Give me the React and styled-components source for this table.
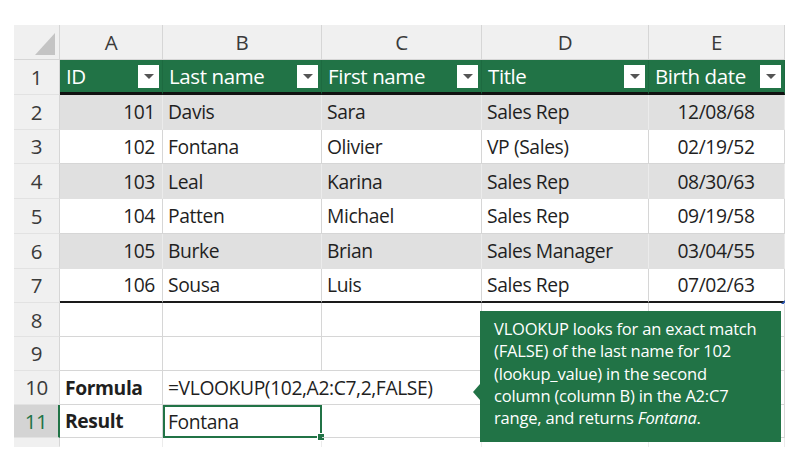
import React from 'react'
import styled, { createGlobalStyle, css } from 'styled-components'

const GREEN = '#217346'
const GRID = '#d6d6d6'
const HEAD_BG = '#f0f0f0'
const BAND = '#e0e0e0'

const GlobalStyle = createGlobalStyle`
  html, body {
    margin: 0;
    background: #ffffff;
  }
  body {
    font-family: 'Open Sans', 'Noto Sans', sans-serif;
    color: #1f1f1f;
  }
`

const Page = styled.div`
  width: 800px;
  height: 474px;
  box-sizing: border-box;
  padding: 25px 15px 0 14px;
  overflow: hidden;
`

const Sheet = styled.div`
  position: relative;
  display: grid;
  grid-template-columns: 46px 103px 159px 160px 167px 136px;
  grid-template-rows: 35px repeat(7, 34.75px) repeat(4, 33.75px) 9px;
  font-size: 19.3px;
  letter-spacing: -0.4px;
`

const Corner = styled.div`
  position: relative;
  background: ${HEAD_BG};
  border-right: 1px solid ${GRID};
  border-bottom: 1px solid ${GRID};

  &::after {
    content: '';
    position: absolute;
    right: 4px;
    bottom: 4px;
    width: 0;
    height: 0;
    border-left: 20px solid transparent;
    border-bottom: 22px solid #c4c4c4;
  }
`

const ColHead = styled.div`
  background: ${HEAD_BG};
  border-right: 1px solid ${GRID};
  border-bottom: 1px solid ${GRID};
  display: flex;
  align-items: center;
  justify-content: center;
  color: #3a3a3a;
  font-size: 20.5px;
`

const RowHead = styled.div`
  box-sizing: border-box;
  display: flex;
  align-items: center;
  justify-content: center;
  font-size: 20.5px;
  background: ${p => (p.$active ? '#d4d4d4' : HEAD_BG)};
  color: ${p => (p.$active ? GREEN : '#3a3a3a')};
  border-right: ${p => (p.$active ? `2px solid ${GREEN}` : `1px solid ${GRID}`)};
  border-bottom: 1px solid ${p => (p.$last ? 'transparent' : '#e2e2e2')};
`

const HeadCell = styled.div`
  box-sizing: border-box;
  background: ${GREEN};
  color: #ffffff;
  font-size: 20.5px;
  display: flex;
  align-items: center;
  justify-content: space-between;
  padding: 0 3px 0 6px;
  border-bottom: 3px solid #111;
  border-right: 1px solid #1d6a40;
`

const FilterButton = styled.span`
  width: 21px;
  height: 23px;
  background: #ffffff;
  display: flex;
  align-items: center;
  justify-content: center;
  margin-top: 1px;

  &::after {
    content: '';
    border-left: 5px solid transparent;
    border-right: 5px solid transparent;
    border-top: 5px solid #555;
  }
`

const Cell = styled.div`
  box-sizing: border-box;
  position: relative;
  display: flex;
  align-items: center;
  white-space: nowrap;
  background: ${p => (p.$band ? BAND : 'transparent')};
  border-right: 1px solid ${p => (p.$band ? '#ebebeb' : GRID)};
  border-bottom: ${p => (p.$edge ? '2px solid #1a1a1a' : p.$band ? `1px solid ${BAND}` : `1px solid ${GRID}`)};
  padding: 0 6px 0 5px;
  justify-content: ${p => (p.$align === 'right' ? 'flex-end' : p.$align === 'center' ? 'center' : 'flex-start')};
  font-weight: ${p => (p.$bold ? 700 : 400)};
  ${p => p.$span && css`grid-column: span ${p.$span};`}
  ${p => p.$pr && css`padding-right: ${p.$pr}px;`}
`

const TailCell = styled.div`
  border-right: 1px solid #ececec;
`

const SelectedCell = styled(Cell)`
  border: 2px solid ${GREEN};
  padding-left: 3px;

  &::after {
    content: '';
    position: absolute;
    right: -5px;
    bottom: -5px;
    width: 6px;
    height: 6px;
    background: ${GREEN};
    border: 1px solid #ffffff;
  }
`

const ResizeMark = styled.span`
  position: absolute;
  right: -1px;
  bottom: -3px;
  width: 0;
  height: 0;
  border-left: 4px solid transparent;
  border-bottom: 4px solid #2f5bb7;
`

const Callout = styled.div`
  position: absolute;
  left: 466px;
  top: 286px;
  width: 301px;
  height: 131px;
  box-sizing: border-box;
  padding: 7px 8px 0 14px;
  background: ${GREEN};
  color: #ffffff;
  font-size: 16.5px;
  line-height: 22.3px;
  letter-spacing: -0.2px;
  white-space: nowrap;

  &::before {
    content: '';
    position: absolute;
    left: -7px;
    top: 73px;
    border-top: 8px solid transparent;
    border-bottom: 8px solid transparent;
    border-right: 7px solid ${GREEN};
  }

  em {
    font-style: italic;
  }
`

const columns = ['A', 'B', 'C', 'D', 'E']
const headers = ['ID', 'Last name', 'First name', 'Title', 'Birth date']
const people = [
  [101, 'Davis', 'Sara', 'Sales Rep', '12/08/68'],
  [102, 'Fontana', 'Olivier', 'VP (Sales)', '02/19/52'],
  [103, 'Leal', 'Karina', 'Sales Rep', '08/30/63'],
  [104, 'Patten', 'Michael', 'Sales Rep', '09/19/58'],
  [105, 'Burke', 'Brian', 'Sales Manager', '03/04/55'],
  [106, 'Sousa', 'Luis', 'Sales Rep', '07/02/63'],
]

const App = () => {
  return (
    <>
      <GlobalStyle />
      <Page>
        <Sheet>
          <Corner />
          {columns.map(c => (
            <ColHead key={c}>{c}</ColHead>
          ))}

          <RowHead>1</RowHead>
          {headers.map(h => (
            <HeadCell key={h}>
              {h}
              <FilterButton />
            </HeadCell>
          ))}

          {people.map((p, i) => {
            const band = i % 2 === 0
            const edge = i === people.length - 1
            return (
              <React.Fragment key={p[0]}>
                <RowHead>{i + 2}</RowHead>
                <Cell $band={band} $edge={edge} $align="right" $pr={7}>{p[0]}</Cell>
                <Cell $band={band} $edge={edge}>{p[1]}</Cell>
                <Cell $band={band} $edge={edge}>{p[2]}</Cell>
                <Cell $band={band} $edge={edge}>{p[3]}</Cell>
                <Cell $band={band} $edge={edge} $align="center">
                  {p[4]}
                  {edge && <ResizeMark />}
                </Cell>
              </React.Fragment>
            )
          })}

          {[8, 9].map(n => (
            <React.Fragment key={n}>
              <RowHead>{n}</RowHead>
              {columns.map(c => (
                <Cell key={c} />
              ))}
            </React.Fragment>
          ))}

          <RowHead>10</RowHead>
          <Cell $bold>Formula</Cell>
          <Cell $span={2}>=VLOOKUP(102,A2:C7,2,FALSE)</Cell>
          <Cell />
          <Cell />

          <RowHead $active>11</RowHead>
          <Cell $bold>Result</Cell>
          <SelectedCell>Fontana</SelectedCell>
          <Cell />
          <Cell />
          <Cell />

          <RowHead $last />
          {columns.map(c => (
            <TailCell key={c} />
          ))}

          <Callout>
            VLOOKUP looks for an exact match<br />
            (FALSE) of the last name for 102<br />
            (lookup_value) in the second<br />
            column (column B) in the A2:C7<br />
            range, and returns <em>Fontana</em>.
          </Callout>
        </Sheet>
      </Page>
    </>
  )
}

export default App
